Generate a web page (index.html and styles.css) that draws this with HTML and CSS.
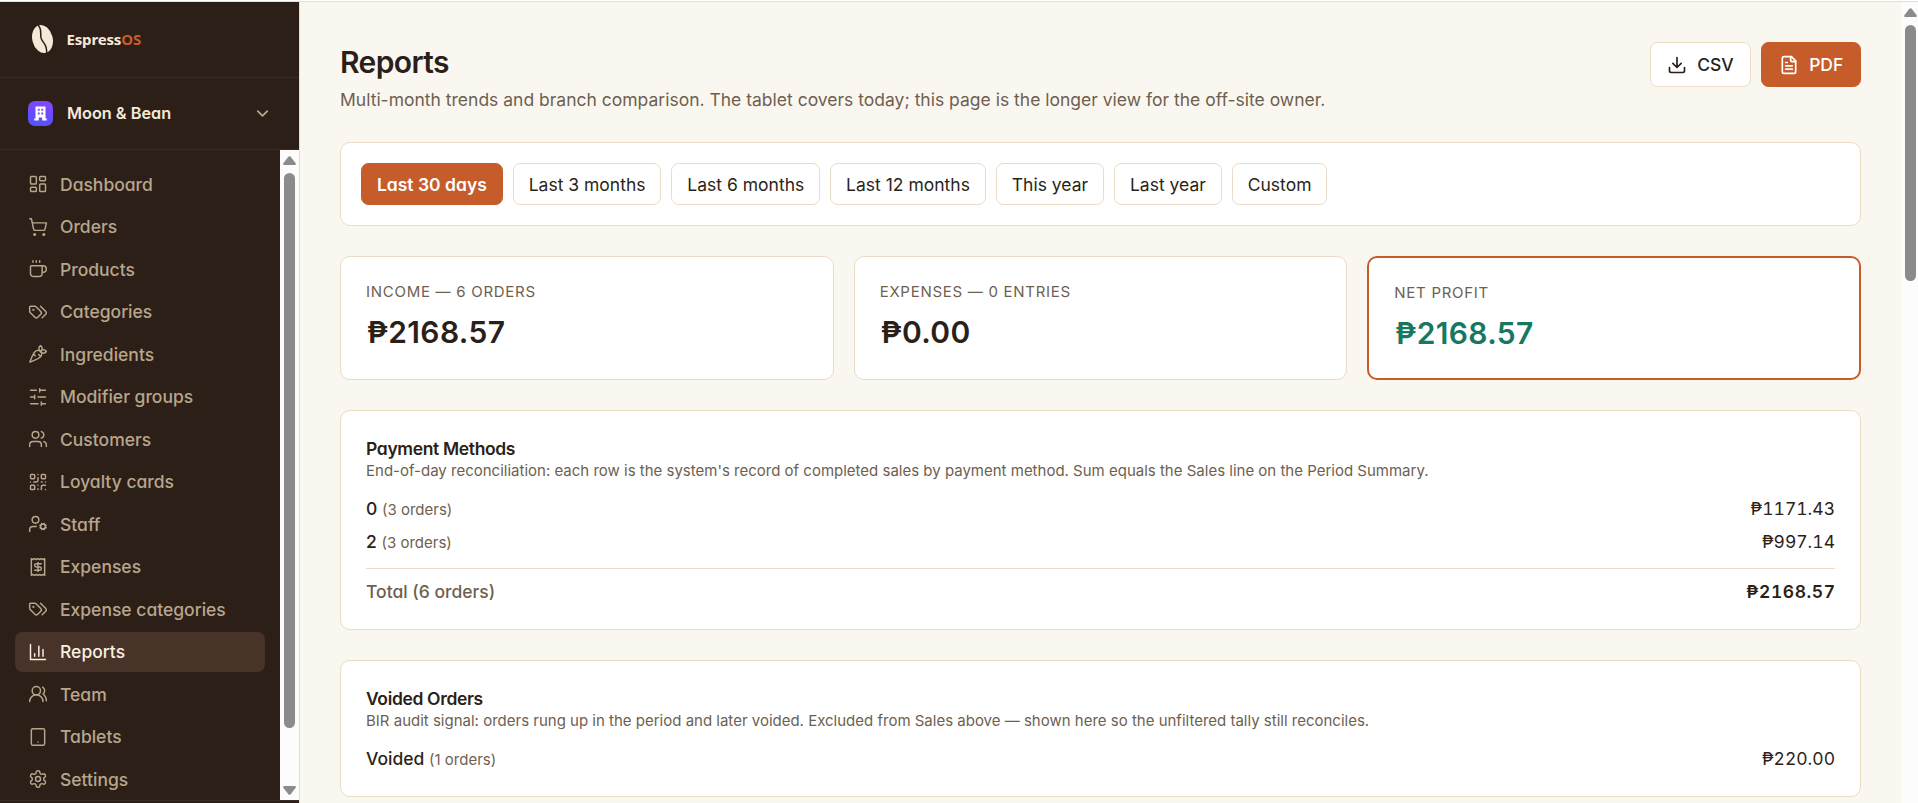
FILE: index.html
```html
<!DOCTYPE html>
<html lang="en">
<head>
<meta charset="utf-8">
<title>Reports – EspressOS</title>
<link rel="stylesheet" href="styles.css">
</head>
<body>
<div class="app">
  <aside class="sidebar">
    <div class="brand">
      <svg class="bean" viewBox="0 0 24 30"><g transform="rotate(-14 12 15)"><ellipse cx="12" cy="15" rx="10.2" ry="14.2" fill="#f5e9d9"/><path d="M11.3 .8C14.500 7 9.500 10.500 11 15.500S15 22 12.700 29.200" fill="none" stroke="#2c1f18" stroke-width="1.500"/></g></svg>
      <span class="brand-name">Espress<b class="brand-os">OS</b></span>
    </div>
    <div class="tenant">
      <span class="tenant-icon"><svg viewBox="0 0 25 25"><path fill="#fff" fill-rule="evenodd" d="M7.500 5.500h10v12h1.300v2h-4.600v-3h-3.400v3H6.200v-2h1.300zM9.800 7.800v2h1.900v-2zm3.500 0v2h1.900v-2zM9.800 11.500v2h1.900v-2zm3.500 0v2h1.900v-2z"/></svg></span>
      <span class="tenant-name">Moon &amp; Bean</span>
      <svg class="chev" viewBox="0 0 24 24"><path d="m6 9 6 6 6-6"/></svg>
    </div>
    <div class="nav-wrap">
      <nav class="nav">
        <a class="item"><svg viewBox="0 0 24 24"><rect width="7" height="9" x="3" y="3" rx="1"/><rect width="7" height="5" x="14" y="3" rx="1"/><rect width="7" height="9" x="14" y="12" rx="1"/><rect width="7" height="5" x="3" y="16" rx="1"/></svg>Dashboard</a>
        <a class="item"><svg viewBox="0 0 24 24"><circle cx="8" cy="21" r="1"/><circle cx="19" cy="21" r="1"/><path d="M2.050 2.050h2l2.660 12.420a2 2 0 0 0 2 1.580h9.780a2 2 0 0 0 1.950-1.570l1.650-7.430H5.120"/></svg>Orders</a>
        <a class="item"><svg viewBox="0 0 24 24"><path d="M10 2v2M14 2v2M6 2v2M16 8a1 1 0 0 1 1 1v8a4 4 0 0 1-4 4H7a4 4 0 0 1-4-4V9a1 1 0 0 1 1-1h14a4 4 0 1 1 0 8h-1"/></svg>Products</a>
        <a class="item"><svg viewBox="0 0 24 24"><path d="m15 5 6.300 6.300a2.400 2.400 0 0 1 0 3.400L17 19"/><path d="M9.586 5.586A2 2 0 0 0 8.172 5H3a1 1 0 0 0-1 1v5.172a2 2 0 0 0 .586 1.414L8.290 18.290a2.426 2.426 0 0 0 3.420 0l3.580-3.580a2.426 2.426 0 0 0 0-3.420z"/><circle cx="6.500" cy="9.500" r=".5" fill="currentColor"/></svg>Categories</a>
        <a class="item"><svg viewBox="0 0 24 24"><path d="M2.270 21.700s9.870-3.500 12.730-6.360a4.500 4.500 0 0 0-6.360-6.370C5.770 11.840 2.270 21.700 2.270 21.700zM8.640 14l-2.050-2.040M15.340 15l-2.460-2.460"/><path d="M22 9s-1.330-2-3.500-2C16.860 7 15 9 15 9s1.330 2 3.500 2S22 9 22 9z"/><path d="M15 2s-2 1.330-2 3.500S15 9 15 9s2-1.840 2-3.500C17 3.330 15 2 15 2z"/></svg>Ingredients</a>
        <a class="item"><svg viewBox="0 0 24 24"><path d="M21 4h-7M10 4H3M21 12h-9M8 12H3M21 20h-5M12 20H3M14 2v4M8 10v4M16 18v4"/></svg>Modifier groups</a>
        <a class="item"><svg viewBox="0 0 24 24"><path d="M16 21v-2a4 4 0 0 0-4-4H6a4 4 0 0 0-4 4v2"/><circle cx="9" cy="7" r="4"/><path d="M22 21v-2a4 4 0 0 0-3-3.870M16 3.130a4 4 0 0 1 0 7.750"/></svg>Customers</a>
        <a class="item"><svg viewBox="0 0 24 24"><rect width="5" height="5" x="3" y="3" rx="1"/><rect width="5" height="5" x="16" y="3" rx="1"/><rect width="5" height="5" x="3" y="16" rx="1"/><path d="M21 16h-3a2 2 0 0 0-2 2v3M21 21v.01M12 7v3a2 2 0 0 1-2 2H7M3 12h.01M12 3h.01M12 16v.01M16 12h1M21 12v.01M12 21v-1"/></svg>Loyalty cards</a>
        <a class="item"><svg viewBox="0 0 24 24"><circle cx="18" cy="15" r="3"/><circle cx="9" cy="7" r="4"/><path d="M10 15H6a4 4 0 0 0-4 4v2M21.700 16.400l-.9-.3M15.200 13.900l-.9-.3M16.600 18.700l.3-.9M19.100 12.200l.3-.9M19.600 18.700l-.4-1M16.800 12.300l-.4-1M14.300 16.600l1-.4M20.700 13.800l1-.4"/></svg>Staff</a>
        <a class="item"><svg viewBox="0 0 24 24"><path d="M4 2v20l2-1 2 1 2-1 2 1 2-1 2 1 2-1 2 1V2l-2 1-2-1-2 1-2-1-2 1-2-1-2 1Z"/><path d="M16 8h-6a2 2 0 1 0 0 4h4a2 2 0 1 1 0 4H8M12 17.500v-11"/></svg>Expenses</a>
        <a class="item"><svg viewBox="0 0 24 24"><path d="m15 5 6.300 6.300a2.400 2.400 0 0 1 0 3.400L17 19"/><path d="M9.586 5.586A2 2 0 0 0 8.172 5H3a1 1 0 0 0-1 1v5.172a2 2 0 0 0 .586 1.414L8.290 18.290a2.426 2.426 0 0 0 3.420 0l3.580-3.580a2.426 2.426 0 0 0 0-3.420z"/><circle cx="6.500" cy="9.500" r=".5" fill="currentColor"/></svg>Expense categories</a>
        <a class="item active"><svg viewBox="0 0 24 24"><path d="M3 3v18h18M18 17V9M13 17V5M8 17v-3"/></svg>Reports</a>
        <a class="item"><svg viewBox="0 0 24 24"><path d="M18 21a8 8 0 0 0-16 0"/><circle cx="10" cy="8" r="5"/><path d="M22 20c0-3.370-2-6.500-4-8a5 5 0 0 0-.45-8.300"/></svg>Team</a>
        <a class="item"><svg viewBox="0 0 24 24"><rect width="16" height="20" x="4" y="2" rx="2"/><path d="M12 18h.01"/></svg>Tablets</a>
        <a class="item"><svg viewBox="0 0 24 24"><path d="M12.220 2h-.44a2 2 0 0 0-2 2v.18a2 2 0 0 1-1 1.730l-.43.25a2 2 0 0 1-2 0l-.15-.08a2 2 0 0 0-2.730.73l-.22.38a2 2 0 0 0 .73 2.730l.15.1a2 2 0 0 1 1 1.720v.51a2 2 0 0 1-1 1.740l-.15.09a2 2 0 0 0-.73 2.730l.22.38a2 2 0 0 0 2.730.73l.15-.08a2 2 0 0 1 2 0l.43.25a2 2 0 0 1 1 1.730V20a2 2 0 0 0 2 2h.44a2 2 0 0 0 2-2v-.18a2 2 0 0 1 1-1.730l.43-.25a2 2 0 0 1 2 0l.15.08a2 2 0 0 0 2.730-.73l.22-.39a2 2 0 0 0-.73-2.730l-.15-.08a2 2 0 0 1-1-1.740v-.5a2 2 0 0 1 1-1.740l.15-.09a2 2 0 0 0 .73-2.730l-.22-.38a2 2 0 0 0-2.730-.73l-.15.08a2 2 0 0 1-2 0l-.43-.25a2 2 0 0 1-1-1.730V4a2 2 0 0 0-2-2z"/><circle cx="12" cy="12" r="3"/></svg>Settings</a>
      </nav>
      <div class="bar nav-bar">
        <svg class="arrow" viewBox="0 0 13 9"><path d="M5.300.8Q6.500-.5 7.700.8L12.800 7.500Q13 9 12 9H1Q0 9 .2 7.500z"/></svg>
        <div class="thumb"></div>
        <svg class="arrow down" viewBox="0 0 13 9"><path d="M5.300.8Q6.500-.5 7.700.8L12.800 7.500Q13 9 12 9H1Q0 9 .2 7.500z"/></svg>
      </div>
    </div>
    <div class="side-foot"></div>
  </aside>

  <main class="main">
    <header class="head">
      <div>
        <h1 class="title">Reports</h1>
        <p class="subtitle">Multi-month trends and branch comparison. The tablet covers today; this page is the longer view for the off-site owner.</p>
      </div>
      <div class="actions">
        <button class="btn"><svg viewBox="0 0 24 24"><path d="M21 15v4a2 2 0 0 1-2 2H5a2 2 0 0 1-2-2v-4M7 10l5 5 5-5M12 15V3"/></svg>CSV</button>
        <button class="btn primary"><svg viewBox="0 0 24 24"><path d="M15 2H6a2 2 0 0 0-2 2v16a2 2 0 0 0 2 2h12a2 2 0 0 0 2-2V7Z"/><path d="M14 2v4a2 2 0 0 0 2 2h4M10 9H8M16 13H8M16 17H8"/></svg>PDF</button>
      </div>
    </header>

    <section class="card filters">
      <button class="chip on">Last 30 days</button>
      <button class="chip">Last 3 months</button>
      <button class="chip">Last 6 months</button>
      <button class="chip">Last 12 months</button>
      <button class="chip">This year</button>
      <button class="chip">Last year</button>
      <button class="chip">Custom</button>
    </section>

    <section class="kpis">
      <div class="card kpi"><div class="label">INCOME — 6 ORDERS</div><div class="value">₱2168.57</div></div>
      <div class="card kpi"><div class="label">EXPENSES — 0 ENTRIES</div><div class="value">₱0.00</div></div>
      <div class="card kpi net"><div class="label">NET PROFIT</div><div class="value">₱2168.57</div></div>
    </section>

    <section class="card panel">
      <h2 class="panel-title">Payment Methods</h2>
      <p class="desc">End-of-day reconciliation: each row is the system's record of completed sales by payment method. Sum equals the Sales line on the Period Summary.</p>
      <div class="rows">
        <div class="row"><span class="name">0 <small class="count">(3 orders)</small></span><span class="amount">₱1171.43</span></div>
        <div class="row"><span class="name">2 <small class="count">(3 orders)</small></span><span class="amount">₱997.14</span></div>
        <div class="row total"><span class="name">Total (6 orders)</span><span class="amount">₱2168.57</span></div>
      </div>
    </section>

    <section class="card panel">
      <h2 class="panel-title">Voided Orders</h2>
      <p class="desc">BIR audit signal: orders rung up in the period and later voided. Excluded from Sales above — shown here so the unfiltered tally still reconciles.</p>
      <div class="rows">
        <div class="row"><span class="name">Voided <small class="count">(1 orders)</small></span><span class="amount">₱220.00</span></div>
      </div>
    </section>
  </main>

  <div class="bar page-bar">
    <svg class="arrow" viewBox="0 0 13 9"><path d="M5.300.8Q6.500-.5 7.700.8L12.800 7.500Q13 9 12 9H1Q0 9 .2 7.500z"/></svg>
    <div class="thumb"></div>
  </div>
</div>
</body>
</html>
```
FILE: styles.css
```css
* { box-sizing: border-box; }
body {
  margin: 0;
  height: 803px;
  overflow: hidden;
  background: #fff;
  color: #2c1f18;
  font: 400 17.5px/25px Inter, "Noto Sans", sans-serif;
}
h1, h2, p { margin: 0; }
svg { flex: none; fill: none; stroke: currentColor; stroke-width: 1.75; stroke-linecap: round; stroke-linejoin: round; }
button { font: inherit; color: inherit; margin: 0; }

.app { display: flex; height: 803px; padding-top: 1px; }
.app > * { border-top: 1px solid #dfe1e1; }

.sidebar {
  width: 300px;
  flex: none;
  display: flex;
  flex-direction: column;
  background: #2c1f18;
  border-right: 1px solid #e6dccf;
  font-feature-settings: "cv11";
}
.brand { height: 76px; flex: none; display: flex; align-items: center; gap: 12px; padding: 0 0 1px 29.5px; border-bottom: 1px solid #3b2a21; }
.bean { width: 25px; height: 30px; stroke: none; }
.brand-name { font: 700 15px/20px "Noto Sans", "Open Sans", sans-serif; color: #f5e9d9; letter-spacing: -.16px; }
.brand-os { color: #c65c2a; font-weight: 700; }
.tenant { height: 72px; flex: none; display: flex; align-items: center; padding: 0 27.5px 0 28px; border-bottom: 1px solid #3b2a21; }
.tenant-icon { width: 25px; height: 25px; border-radius: 7px; background: linear-gradient(200deg, #8b45fb, #5a50ff 75%); }
.tenant-icon svg { display: block; width: 25px; height: 25px; stroke: none; }
.tenant-name { flex: 1; margin-left: 14px; color: #f5e9d9; font-weight: 600; font-size: 16.25px; }
.chev { width: 19px; height: 19px; color: #b8a68c; stroke-width: 2.3; }

.nav-wrap { display: flex; height: 650px; flex: none; }
.nav { flex: 1; padding: 14px 15px; display: flex; flex-direction: column; gap: 2.5px; }
.item { display: flex; align-items: center; gap: 12.5px; height: 40px; flex: none; padding: 0 12.5px; border-radius: 7.5px; color: #b8a68c; font-weight: 500; white-space: nowrap; }
.item svg { width: 20px; height: 20px; }
.item.active { background: #483328; color: #f9efe2; }
.side-foot { height: 3px; border-top: 1px solid #3b2a21; }

.bar { flex: none; display: flex; flex-direction: column; align-items: center; background: #fcfcfc; }
.nav-bar { width: 19px; padding: 6px 0 5px; }
.page-bar { width: 17px; padding: 6px 0 0 1px; }
.arrow { width: 13px; height: 9px; stroke: none; fill: #8b8b8b; }
.arrow.down { transform: rotate(180deg); margin-top: auto; }
.thumb { width: 11px; margin-top: 8px; border-radius: 6px; background: #8b8b8b; }
.nav-bar .thumb { height: 555px; }
.page-bar .thumb { height: 256px; }

.main { flex: 1; min-width: 0; background: #faf7f0; padding: 40px 40px 0; display: flex; flex-direction: column; overflow: hidden; }
.main > * { flex: none; }
.head { display: flex; justify-content: space-between; align-items: flex-start; height: 70px; margin-bottom: 30px; }
.title { font-size: 30px; line-height: 40px; font-weight: 600; letter-spacing: -.6px; }
.subtitle { margin-top: 5px; color: #6e5f50; }
.actions { display: flex; gap: 10px; }
.btn { display: flex; align-items: center; gap: 10px; height: 45px; padding: 0 16.7px; border: 1px solid #eadcc7; border-radius: 7.5px; background: #fff; font-weight: 500; }
.btn svg { width: 20px; height: 20px; stroke-width: 2; }
.btn.primary { background: #c65c2a; border-color: #c65c2a; color: #fff; }

.card { background: #fff; border: 1px solid #eadcc7; border-radius: 10px; }
.filters { display: flex; gap: 10px; padding: 20px; height: 84px; margin-bottom: 30px; }
.chip { height: 42px; padding: 0 14.95px; border: 1px solid #eadcc7; border-radius: 7.5px; background: #fff; white-space: nowrap; }
.chip.on { background: #c65c2a; border-color: #c65c2a; color: #fff; font-weight: 600; font-feature-settings: "cv11"; }

.kpis { display: grid; grid-template-columns: repeat(3, 1fr); gap: 20px; height: 124px; margin-bottom: 30px; }
.kpi { padding: 25px; }
.kpi.net { border: 2px solid #c65c2a; }
.label { font-size: 15px; line-height: 20px; letter-spacing: .72px; color: #6e5f50; }
.value { margin-top: 10px; padding-left: 1px; font-size: 30px; line-height: 40px; font-weight: 600; letter-spacing: .35px; }
.net .value { color: #17775f; }

.panel { padding: 25px; margin-bottom: 30px; }
.panel-title { font-size: 17.5px; line-height: 25px; font-weight: 600; letter-spacing: -.35px; font-feature-settings: "cv11"; }
.desc { font-size: 15px; line-height: 20px; color: #6e5f50; }
.rows { margin-top: 15px; }
.row { display: flex; justify-content: space-between; align-items: center; height: 25px; margin-bottom: 8px; }
.row:last-child { margin-bottom: 0; }
.name { font-weight: 500; font-feature-settings: "cv11"; }
.count { font-size: 15px; font-weight: 400; color: #6e5f50; }
.amount { font-variant-numeric: tabular-nums; }
.total { height: 36px; margin-top: 14px; padding-top: 10px; border-top: 1px solid #eadcc7; }
.total .name { color: #6e5f50; }
.total .amount { font-weight: 600; letter-spacing: .55px; margin-right: -.55px; }
```
